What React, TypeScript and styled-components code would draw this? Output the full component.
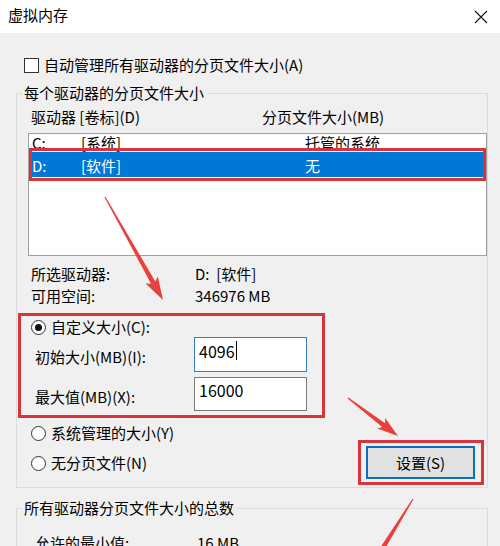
import React from "react";
import styled, { createGlobalStyle } from "styled-components";

const GlobalStyle = createGlobalStyle`
  html, body { margin: 0; padding: 0; background: #f0f0f0; }
  body {
    font-family: "Noto Sans CJK SC", "Microsoft YaHei", sans-serif;
    color: #000;
  }
  * { box-sizing: border-box; }
`;

const Window = styled.div`
  position: relative;
  width: 500px;
  height: 546px;
  overflow: hidden;
  background: #f0f0f0;
  font-size: 15px;
  line-height: 22px;
`;

const TitleBar = styled.div`
  display: flex;
  align-items: center;
  justify-content: space-between;
  height: 33px;
  padding: 0 12px 0 8px;
  background: #fff;
`;

const Title = styled.span`
  font-size: 15px;
  line-height: 22px;
  margin-bottom: 3px;
`;

const Body = styled.div`
  padding: 21px 12px 0 16px;
`;

const CheckRow = styled.label`
  display: flex;
  align-items: center;
  gap: 5px;
  height: 22px;
  margin-left: 8px;
`;

const CheckBox = styled.span`
  width: 15px;
  height: 15px;
  border: 1px solid #333;
  background: #fff;
`;

const Group = styled.fieldset<{ $top: number }>`
  margin: ${(p) => p.$top}px 0 0;
  padding: 4px 0 2px 11px;
  border: 1px solid #dcdcdc;
  min-width: 0;
`;

const Legend = styled.legend`
  margin-left: -6px;
  padding: 0 2px;
  line-height: 20px;
`;

const HeaderRow = styled.div`
  display: grid;
  grid-template-columns: 231px 1fr;
  padding-left: 3px;
  line-height: 20px;
`;

const ListBox = styled.div`
  margin-top: 6px;
  height: 123px;
  border: 1px solid #a0a0a0;
  background: #fff;
  overflow: hidden;
`;

const ListRow = styled.div<{ $selected?: boolean }>`
  position: relative;
  display: grid;
  grid-template-columns: 49px 224px 1fr;
  height: 25px;
  padding: 3px 0 0 3px;
  line-height: 21px;
  background: ${(p) => (p.$selected ? "#0078d7" : "transparent")};
  color: ${(p) => (p.$selected ? "#fff" : "#000")};
  &:first-child {
    height: 20px;
    padding-top: 0;
    margin-top: -2px;
  }
`;

const RowMark = styled.span`
  position: absolute;
  inset: -4px 0 -4px 0;
  border: 3px solid #d8343b;
`;

const InfoGrid = styled.div`
  display: grid;
  grid-template-columns: 164px 1fr;
  margin-top: 7px;
  padding-left: 3px;
  line-height: 22px;
`;

const RedFrame = styled.div`
  width: 307px;
  margin: 6px 0 0 -10px;
  padding: 1px 0 4px 10px;
  border: 3px solid #d8343b;
`;

const RadioRow = styled.div<{ $h?: number }>`
  display: flex;
  align-items: center;
  gap: 5px;
  height: ${(p) => p.$h ?? 22}px;
`;

const Radio = styled.span<{ $checked?: boolean }>`
  position: relative;
  width: 15px;
  height: 15px;
  border: 1px solid #333;
  border-radius: 50%;
  background: #fff;
  &::after {
    content: "";
    display: ${(p) => (p.$checked ? "block" : "none")};
    position: absolute;
    left: 3px;
    top: 3px;
    width: 7px;
    height: 7px;
    border-radius: 50%;
    background: #111;
  }
`;

const FieldRow = styled.div<{ $h: number; $top: number }>`
  display: grid;
  grid-template-columns: 159px 113px;
  align-items: center;
  height: ${(p) => p.$h}px;
  margin-top: ${(p) => p.$top}px;
  padding-left: 4px;
`;

const FieldLabel = styled.span`
  padding-top: 5px;
`;

const TextBox = styled.div<{ $focused?: boolean }>`
  display: flex;
  align-items: center;
  height: 100%;
  padding: 0 3px 8px 4px;
  border: 1px solid ${(p) => (p.$focused ? "#3a7fc0" : "#7a7a7a")};
  background: #fff;
  font-size: 16px;
`;

const Caret = styled.span`
  width: 1px;
  height: 19px;
  margin-left: 1px;
  background: #000;
`;

const BottomRow = styled.div`
  display: flex;
  justify-content: space-between;
  align-items: flex-start;
  margin-top: 4px;
  padding-left: 3px;
`;

const RadioColumn = styled.div`
  display: flex;
  flex-direction: column;
  gap: 8px;
`;

const ButtonFrame = styled.div`
  margin: 18px 3px 0 0;
  padding: 3px 6px 3px 5px;
  border: 3px solid #d8343b;
`;

const Button = styled.button`
  width: 109px;
  height: 33px;
  border: 2px solid #0a6fc2;
  background: #e1e1e1;
  font: inherit;
  font-size: 15px;
  color: #000;
  padding: 0;
`;

const SumRow = styled.div`
  display: grid;
  grid-template-columns: 162px 1fr;
  margin-top: 10px;
  padding-left: 7px;
`;

const Overlay = styled.svg`
  position: absolute;
  left: 0;
  top: 0;
  pointer-events: none;
`;

const arrow = (
  x1: number,
  y1: number,
  x2: number,
  y2: number,
  head = 20,
  wing = 7,
  tail = 0.6,
  neck = 2.4
) => {
  const len = Math.hypot(x2 - x1, y2 - y1);
  const ux = (x2 - x1) / len;
  const uy = (y2 - y1) / len;
  const nx = -uy;
  const ny = ux;
  const bx = x2 - ux * head;
  const by = y2 - uy * head;
  const wx = bx - ux * 3;
  const wy = by - uy * 3;
  const p = (x: number, y: number, k: number) =>
    `${(x + nx * k).toFixed(1)},${(y + ny * k).toFixed(1)}`;
  return [
    p(x1, y1, tail),
    p(bx, by, neck),
    p(wx, wy, wing),
    p(x2, y2, 0),
    p(wx, wy, -wing),
    p(bx, by, -neck),
    p(x1, y1, -tail),
  ].join(" ");
};

export default function App() {
  return (
    <Window>
      <GlobalStyle />
      <TitleBar>
        <Title>虚拟内存</Title>
        <svg width="14" height="14" viewBox="0 0 14 14">
          <path d="M1 1 L13 13 M13 1 L1 13" stroke="#111" strokeWidth="1.1" />
        </svg>
      </TitleBar>
      <Body>
        <CheckRow>
          <CheckBox />
          <span>自动管理所有驱动器的分页文件大小(A)</span>
        </CheckRow>

        <Group $top={7}>
          <Legend>每个驱动器的分页文件大小</Legend>
          <HeaderRow>
            <span>驱动器 [卷标](D)</span>
            <span>分页文件大小(MB)</span>
          </HeaderRow>
          <ListBox>
            <ListRow>
              <span>C:</span>
              <span>[系统]</span>
              <span>托管的系统</span>
            </ListRow>
            <ListRow $selected>
              <span>D:</span>
              <span>[软件]</span>
              <span>无</span>
              <RowMark />
            </ListRow>
          </ListBox>
          <InfoGrid>
            <span>所选驱动器:</span>
            <span>D:&nbsp;&nbsp;[软件]</span>
            <span>可用空间:</span>
            <span>346976 MB</span>
          </InfoGrid>

          <RedFrame>
            <RadioRow $h={20}>
              <Radio $checked />
              <span>自定义大小(C):</span>
            </RadioRow>
            <FieldRow $h={35} $top={0}>
              <FieldLabel>初始大小(MB)(I):</FieldLabel>
              <TextBox $focused>
                4096
                <Caret />
              </TextBox>
            </FieldRow>
            <FieldRow $h={34} $top={5}>
              <FieldLabel>最大值(MB)(X):</FieldLabel>
              <TextBox>16000</TextBox>
            </FieldRow>
          </RedFrame>

          <BottomRow>
            <RadioColumn>
              <RadioRow>
                <Radio />
                <span>系统管理的大小(Y)</span>
              </RadioRow>
              <RadioRow>
                <Radio />
                <span>无分页文件(N)</span>
              </RadioRow>
            </RadioColumn>
            <ButtonFrame>
              <Button>设置(S)</Button>
            </ButtonFrame>
          </BottomRow>
        </Group>

        <Group $top={10}>
          <Legend>所有驱动器分页文件大小的总数</Legend>
          <SumRow>
            <span>允许的最小值:</span>
            <span>16 MB</span>
          </SumRow>
        </Group>
      </Body>

      <Overlay width="500" height="546" viewBox="0 0 500 546">
        <polygon points={arrow(105, 197, 163, 300, 20, 7)} fill="#e8403c" />
        <polygon points={arrow(348, 398, 398, 436, 18, 6.5)} fill="#e8403c" />
        <polygon points={arrow(413, 499, 368, 572, 20, 7, 0.6, 2.6)} fill="#e8403c" />
      </Overlay>
    </Window>
  );
}
